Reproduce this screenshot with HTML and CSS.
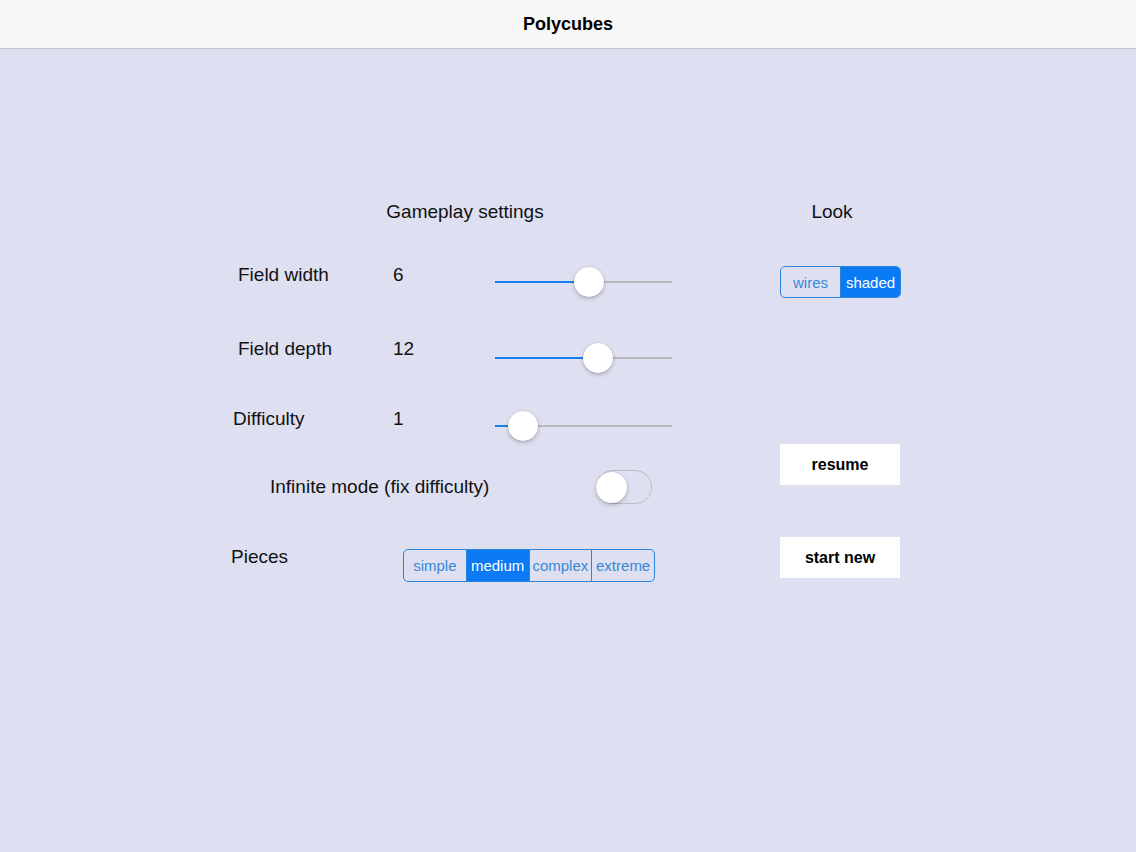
FILE: index.html
```html
<!DOCTYPE html>
<html lang="en">
<head>
    <meta charset="UTF-8">
    <meta name="viewport" content="width=device-width, initial-scale=1.0">
    <title>Polycubes</title>
    <link rel="stylesheet" href="styles.css">
</head>
<body>
    <header class="nav-bar">
        <h1>Polycubes</h1>
    </header>

    <main class="settings">
        <!-- left column: game options -->
        <section class="gameplay">
            <h2 class="section-title">Gameplay settings</h2>

            <div class="row row-width">
                <span class="label indent-7">Field width</span>
                <span class="value">6</span>
                <div class="slider">
                    <div class="track"><div class="fill" style="width: 94px"></div></div>
                    <div class="thumb" style="left: 94px"></div>
                </div>
            </div>

            <div class="row row-depth">
                <span class="label indent-7">Field depth</span>
                <span class="value">12</span>
                <div class="slider">
                    <div class="track"><div class="fill" style="width: 103px"></div></div>
                    <div class="thumb" style="left: 103px"></div>
                </div>
            </div>

            <div class="row row-difficulty">
                <span class="label indent-2">Difficulty</span>
                <span class="value">1</span>
                <div class="slider">
                    <div class="track"><div class="fill" style="width: 28px"></div></div>
                    <div class="thumb" style="left: 28px"></div>
                </div>
            </div>

            <div class="row row-infinite">
                <span class="label infinite-label">Infinite mode (fix difficulty)</span>
                <div class="toggle"><div class="knob"></div></div>
            </div>

            <div class="row row-pieces">
                <span class="label pieces-label">Pieces</span>
                <div class="segmented pieces">
                    <button>simple</button>
                    <button class="selected">medium</button>
                    <button>complex</button>
                    <button>extreme</button>
                </div>
            </div>
        </section>

        <!-- right column: look + actions -->
        <section class="look">
            <h2 class="section-title look-title">Look</h2>
            <div class="segmented look-style">
                <button>wires</button>
                <button class="selected">shaded</button>
            </div>
            <button class="plain-btn resume">resume</button>
            <button class="plain-btn start">start new</button>
        </section>
    </main>
</body>
</html>
```

FILE: styles.css
```css
/* Polycubes settings screen */
body {
    font-family: "Liberation Sans", Arial, sans-serif;
    background-color: #dee0f1;
    margin: 0;
    padding: 0;
    height: 852px;
    color: #111;
}

.nav-bar {
    height: 48px;
    background-color: #f7f7f7;
    border-bottom: 1px solid #c4c5cb;
    display: flex;
    justify-content: center;
    align-items: center;
}

.nav-bar h1 {
    margin: 0;
    font-size: 18px;
    font-weight: bold;
    color: #000;
}

.settings {
    display: flex;
    padding-top: 148px;
    padding-left: 231px;
}

.section-title {
    margin: 0;
    font-size: 19px;
    font-weight: normal;
    line-height: 30px;
    height: 30px;
}

/* left column */
.gameplay {
    width: 442px;
}

.gameplay .section-title {
    width: 468px;
    text-align: center;
}

.row {
    display: flex;
    align-items: flex-start;
    height: 30px;
}

.row-width { margin-top: 33px; }
.row-depth { margin-top: 44px; }
.row-difficulty { margin-top: 40px; }
.row-infinite { margin-top: 36px; height: 34px; align-items: center; }
.row-pieces { margin-top: 38px; }

.row-depth .slider { margin-top: 9px; }

.label {
    font-size: 19px;
    line-height: 30px;
    width: 162px;
    box-sizing: border-box;
}

.indent-7 { padding-left: 7px; }
.indent-2 { padding-left: 2px; }

.value {
    font-size: 19px;
    line-height: 30px;
    width: 102px;
}

.slider {
    position: relative;
    width: 177px;
    height: 30px;
    margin-top: 7px;
}

.slider .track {
    position: absolute;
    top: 14px;
    left: 0;
    right: 0;
    height: 2px;
    background-color: #b7b8bd;
}

.slider .fill {
    height: 2px;
    background-color: #1a7ee8;
}

.slider .thumb {
    position: absolute;
    top: 0;
    width: 30px;
    height: 30px;
    margin-left: -15px;
    border-radius: 50%;
    background-color: #fff;
    box-shadow: 0 2px 4px rgba(0, 0, 0, 0.22), 0 0 0 0.5px rgba(0, 0, 0, 0.1);
}

.infinite-label {
    width: 365px;
    padding-left: 39px;
    line-height: 34px;
}

.toggle {
    width: 56px;
    height: 34px;
    box-sizing: border-box;
    border: 1.5px solid #bdbec4;
    border-radius: 17px;
    display: flex;
    align-items: center;
}

.toggle .knob {
    width: 31px;
    height: 31px;
    margin-left: -1px;
    border-radius: 50%;
    background-color: #fff;
    box-shadow: 0 2px 4px rgba(0, 0, 0, 0.22), 0 0 0 0.5px rgba(0, 0, 0, 0.1);
}

.pieces-label {
    width: 172px;
}

/* segmented controls */
.segmented {
    display: flex;
    border: 1px solid #2e84dd;
    border-radius: 5px;
    overflow: hidden;
    box-sizing: border-box;
}

.segmented button {
    flex: 1;
    margin: 0;
    padding: 0;
    border: none;
    border-left: 1px solid #2e84dd;
    background: transparent;
    color: #3888d8;
    font-family: "Liberation Sans", Arial, sans-serif;
    font-size: 15px;
}

.segmented button:first-child {
    border-left: none;
}

.segmented button.selected {
    background-color: #0a7af5;
    color: #fff;
}

.pieces {
    width: 252px;
    height: 33px;
    margin-top: 7px;
}

/* right column */
.look {
    width: 120px;
    margin-left: 107px;
    display: flex;
    flex-direction: column;
}

.look-title {
    text-align: center;
    padding-right: 16px;
}

.look-style {
    width: 121px;
    height: 32px;
    margin-top: 39px;
}

.plain-btn {
    width: 120px;
    height: 41px;
    border: none;
    background-color: #fff;
    color: #000;
    font-family: "Liberation Sans", Arial, sans-serif;
    font-size: 16px;
    font-weight: bold;
}

.resume { margin-top: 146px; }
.start { margin-top: 52px; }
```
